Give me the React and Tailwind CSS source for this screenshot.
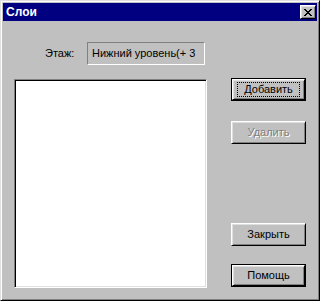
import React from "react";

const raised =
  "border border-t-white border-l-white border-r-black border-b-black shadow-[inset_1px_1px_#dfdfdf,inset_-1px_-1px_#808080]";

const Button = ({ children, isDefault, focused, disabled }) => {
  const inner = (
    <div
      className={`w-full h-full bg-[#c0c0c0] flex items-center justify-center ${raised}`}
    >
      <span
        className={`flex items-center justify-center ${
          focused ? "border border-dotted border-black px-[6px] h-[15px]" : ""
        } ${disabled ? "text-[#808080] [text-shadow:1px_1px_#fff]" : "text-black"}`}
      >
        {children}
      </span>
    </div>
  );
  if (isDefault) {
    return <div className="w-[75px] h-[23px] border border-black">{inner}</div>;
  }
  return <div className="w-[75px] h-[23px]">{inner}</div>;
};

export default function App() {
  return (
    <div
      className="w-[320px] h-[301px] bg-[#c0c0c0] border border-t-[#dfdfdf] border-l-[#dfdfdf] border-r-black border-b-black shadow-[inset_1px_1px_#fff,inset_-1px_-1px_#808080] p-[2px] text-[11px] leading-none"
      style={{ fontFamily: '"Liberation Sans", Arial, sans-serif' }}
    >
      {/* title bar */}
      <div className="h-[18px] bg-[#000080] flex items-center justify-between pl-[3px] pr-[1px]">
        <span className="text-white font-bold text-[12px]">Слои</span>
        <div className={`w-[16px] h-[14px] bg-[#c0c0c0] flex items-center justify-center ${raised}`}>
          <svg width="8" height="7" viewBox="0 0 8 7" shapeRendering="crispEdges">
            <path
              fill="#000"
              d="M0 0h2v1h-2zM6 0h2v1h-2zM1 1h2v1h-2zM5 1h2v1h-2zM2 2h4v1h-4zM3 3h2v1h-2zM2 4h4v1h-4zM1 5h2v1h-2zM5 5h2v1h-2zM0 6h2v1h-2zM6 6h2v1h-2z"
            />
          </svg>
        </div>
      </div>

      {/* body */}
      <div className="flex pl-[11px] pt-[21px]">
        <div className="w-[193px] flex flex-col">
          <div className="flex items-center h-[23px] pl-[31px]">
            <span className="w-[42px]">Этаж:</span>
            <div className="w-[118px] h-[23px] border border-t-[#808080] border-l-[#808080] border-r-white border-b-white flex items-center pl-[4px] overflow-hidden whitespace-nowrap">
              Нижний уровень(+ 3
            </div>
          </div>
          <div className="mt-[14px] h-[209px] bg-white border border-t-[#808080] border-l-[#808080] border-r-white border-b-white shadow-[inset_1px_1px_#000,inset_-1px_-1px_#dfdfdf]" />
        </div>

        <div className="ml-[24px] mt-[36px] flex flex-col">
          <Button isDefault focused>
            Добавить
          </Button>
          <div className="mt-[20px]">
            <Button disabled>Удалить</Button>
          </div>
          <div className="mt-[79px]">
            <Button>Закрыть</Button>
          </div>
          <div className="mt-[18px]">
            <Button isDefault>Помощь</Button>
          </div>
        </div>
      </div>
    </div>
  );
}
